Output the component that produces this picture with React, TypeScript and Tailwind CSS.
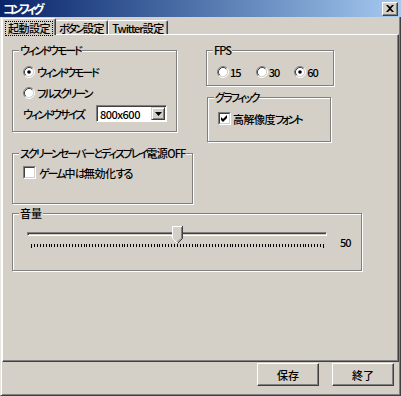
import type { ReactNode } from "react";

const font =
  "font-['Noto_Sans_CJK_JP',sans-serif] [font-feature-settings:'palt'] tracking-[-1px] whitespace-nowrap";

// kana are squeezed more than kanji, like the old bitmap UI font
const kana = "tracking-[-2px]";
const kanji = "tracking-[-0.5px]";

function Radio({ checked }: { checked?: boolean }) {
  return (
    <svg width="12" height="12" viewBox="0 0 12 12" className="shrink-0">
      <circle cx="6" cy="6" r="4.5" fill="#fff" />
      <path d="M2.11 9.89 A5.5 5.5 0 0 1 9.89 2.11" fill="none" stroke="#808080" />
      <path d="M9.89 2.11 A5.5 5.5 0 0 1 2.11 9.89" fill="none" stroke="#fff" />
      <path d="M2.82 9.18 A4.5 4.5 0 0 1 9.18 2.82" fill="none" stroke="#404040" />
      <path d="M9.18 2.82 A4.5 4.5 0 0 1 2.82 9.18" fill="none" stroke="#d4d0c8" />
      {checked && <circle cx="6" cy="6" r="1.8" fill="#000" />}
    </svg>
  );
}

function Checkbox({ checked }: { checked?: boolean }) {
  return (
    <span className="block h-[13px] w-[13px] shrink-0 border border-t-[#808080] border-l-[#808080] border-r-white border-b-white">
      <span className="block h-full w-full border border-t-[#404040] border-l-[#404040] border-r-[#d4d0c8] border-b-[#d4d0c8] bg-white">
        {checked && (
          <svg width="9" height="9" viewBox="0 0 9 9">
            <path d="M1 3 L3 5 L7 1 L7 4 L3 8 L1 6 Z" fill="#000" />
          </svg>
        )}
      </span>
    </span>
  );
}

function Group({
  label,
  className,
  children,
}: {
  label: ReactNode;
  className: string;
  children?: ReactNode;
}) {
  return (
    <div
      className={`relative border border-[#808080] shadow-[1px_1px_0_#fff,inset_1px_1px_0_#fff] ${className}`}
    >
      <span className="absolute top-[-7px] left-[6px] bg-[#d4d0c8] px-[1px] leading-[12px]">
        {label}
      </span>
      {children}
    </div>
  );
}

function Button({ label }: { label: string }) {
  return (
    <button
      type="button"
      className="flex h-[23px] w-[62px] items-center justify-center border border-t-white border-l-white border-r-[#404040] border-b-[#404040] leading-[12px] tracking-normal shadow-[inset_-1px_-1px_0_#808080]"
    >
      {label}
    </button>
  );
}

function Ticks() {
  const ticks = [];
  for (let i = 0; i <= 100; i++) {
    const x = Math.round(4 + i * 2.92) + 0.5;
    const end = i === 0 || i === 100;
    ticks.push(
      <line key={i} x1={x} x2={x} y1={0} y2={end ? 4 : 3} stroke="#000" />
    );
  }
  return (
    <svg width="300" height="5" className="absolute top-[19px] left-0">
      {ticks}
    </svg>
  );
}

export default function App() {
  return (
    <div
      className={`flex h-[396px] w-[401px] flex-col bg-[#d4d0c8] text-[11px] font-medium text-black ${font}`}
    >
      {/* title bar */}
      <div className="flex h-[17px] shrink-0 items-center justify-between bg-gradient-to-r from-[#0a246a] to-[#a6caf0] pr-[3px] pl-[3px]">
        <span className="text-[12px] leading-[12px] font-bold tracking-[-3px] text-white">
          コンフィグ
        </span>
        <span className="flex h-[14px] w-[16px] items-center justify-center border border-t-white border-l-white border-r-[#404040] border-b-[#404040] bg-[#d4d0c8] shadow-[inset_-1px_-1px_0_#808080]">
          <svg width="8" height="7" viewBox="0 0 8 7">
            <path
              d="M0 0h2l2 2 2-2h2L5 3.5 8 7H6L4 5 2 7H0l3-3.5Z"
              fill="#000"
            />
          </svg>
        </span>
      </div>

      {/* window body */}
      <div className="flex flex-1 flex-col border-r border-b border-l border-r-[#404040] border-b-[#404040] border-l-[#e6e4de] shadow-[inset_1px_0_0_#fff,inset_-1px_-1px_0_#808080]">
        {/* tabs */}
        <div className="flex h-[17px] shrink-0 items-end pl-[1px] leading-[12px]">
          <div className="relative z-10 -mb-px flex h-[17px] w-[54px] items-start justify-center rounded-t-[2px] border-t border-r border-l border-t-white border-r-[#404040] border-l-white bg-[#d4d0c8] pt-[2px] shadow-[inset_-1px_0_0_#808080]">
            <span className={`border border-dotted border-black px-[2px] pb-[1px] ${kanji}`}>
              起動設定
            </span>
          </div>
          <div className="flex h-[14px] w-[52px] items-start justify-center rounded-t-[2px] border-t border-r border-t-white border-r-[#404040] pt-[1px] shadow-[inset_-1px_0_0_#808080]">
            <span className={kana}>ボタン</span>
            <span className={kanji}>設定</span>
          </div>
          <div className="flex h-[14px] w-[60px] items-start justify-center rounded-t-[2px] border-t border-r border-l border-t-white border-r-[#404040] border-l-white pt-[1px] shadow-[inset_-1px_0_0_#808080]">
            Twitter<span className={kanji}>設定</span>
          </div>
        </div>

        {/* tab panel */}
        <div className="mx-[1px] h-[328px] shrink-0 border border-t-white border-r-[#404040] border-b-[#404040] border-l-white pt-[15px] pl-[9px] leading-[12px] shadow-[inset_-1px_-1px_0_#808080]">
          <div className="flex gap-[13px]">
            <div className="flex w-[181px] flex-col">
              <Group
                label={<span className={kana}>ウィンドウモード</span>}
                className="h-[82px] w-[165px]"
              >
                <div className="flex flex-col pt-[10px] pl-[10px]">
                  <div className="flex h-[21px] items-center gap-[2px]">
                    <Radio checked />
                    <span className={kana}>ウィンドウモード</span>
                  </div>
                  <div className="flex h-[21px] items-center gap-[2px]">
                    <Radio />
                    <span className={kana}>フルスクリーン</span>
                  </div>
                  <div className="flex h-[21px] items-center">
                    <span className={`w-[73px] ${kana}`}>ウィンドウサイズ</span>
                    <div className="flex h-[17px] w-[71px] items-center border border-t-[#808080] border-l-[#808080] border-r-white border-b-white bg-white shadow-[inset_1px_1px_0_#404040]">
                      <span className="flex-1 pl-[3px] tracking-[-0.5px]">800x600</span>
                      <span className="mr-[1px] flex h-[13px] w-[14px] items-center justify-center border border-t-[#d4d0c8] border-l-[#d4d0c8] border-r-[#404040] border-b-[#404040] bg-[#d4d0c8] shadow-[inset_1px_1px_0_#fff,inset_-1px_-1px_0_#808080]">
                        <svg width="7" height="4" viewBox="0 0 7 4">
                          <path d="M0 0h7L3.5 4Z" fill="#000" />
                        </svg>
                      </span>
                    </div>
                  </div>
                </div>
              </Group>

              <Group
                label={
                  <>
                    <span className={kana}>スクリーンセーバーとディスプレイ</span>
                    <span className={kanji}>電源</span>
                    <span className="tracking-[-1px]">OFF</span>
                  </>
                }
                className="mt-[21px] h-[51px] w-[181px]"
              >
                <div className="flex items-center gap-[3px] pt-[12px] pl-[10px]">
                  <Checkbox />
                  <span>
                    <span className={kana}>ゲーム</span>
                    <span className={kanji}>中</span>
                    <span className={kana}>は</span>
                    <span className={kanji}>無効化</span>
                    <span className={kana}>する</span>
                  </span>
                </div>
              </Group>
            </div>

            <div className="flex flex-col">
              <Group label="FPS" className="h-[36px] w-[128px]">
                <div className="mt-[10px] flex h-[20px] items-center pt-[1px] pl-[10px]">
                  <div className="flex w-[40px] items-center gap-[1px]">
                    <Radio />
                    <span>15</span>
                  </div>
                  <div className="flex w-[40px] items-center gap-[1px]">
                    <Radio />
                    <span>30</span>
                  </div>
                  <div className="flex w-[40px] items-center gap-[1px]">
                    <Radio checked />
                    <span>60</span>
                  </div>
                </div>
              </Group>

              <Group
                label={<span className={kana}>グラフィック</span>}
                className="mt-[11px] ml-[1px] h-[45px] w-[124px]"
              >
                <div className="flex items-center gap-[2px] pt-[14px] pl-[10px]">
                  <Checkbox checked />
                  <span>
                    <span className={kanji}>高解像度</span>
                    <span className="tracking-[-2.5px]">フォント</span>
                  </span>
                </div>
              </Group>
            </div>
          </div>

          <Group
            label={<span className="tracking-normal">音量</span>}
            className="mt-[9px] h-[58px] w-[350px]"
          >
            <div className="flex pt-[11px] pl-[14px]">
              <div className="relative h-[24px] w-[300px]">
                <div className="absolute top-[7px] left-0 h-[4px] w-full border border-t-[#808080] border-l-[#808080] border-r-white border-b-white bg-[#d4d0c8] shadow-[inset_1px_1px_0_#404040]" />
                <svg
                  width="11"
                  height="18"
                  viewBox="0 0 11 18"
                  className="absolute top-[1px] left-[145px]"
                >
                  <path d="M0 0H11V12.5L5.5 18L0 12.5Z" fill="#d4d0c8" />
                  <path d="M0.5 12.5V0.5H10" fill="none" stroke="#fff" />
                  <path d="M0.5 12.5L5 17" fill="none" stroke="#fff" />
                  <path d="M10.5 0V12.5L5.5 17.5" fill="none" stroke="#404040" />
                  <path d="M9.5 1V12L5.5 16" fill="none" stroke="#808080" />
                </svg>
                <Ticks />
              </div>
              <span className="mt-[11px] ml-[13px]">50</span>
            </div>
          </Group>
        </div>

        {/* footer buttons */}
        <div className="flex flex-1 justify-end gap-[13px] pt-[1px] pr-[6px]">
          <Button label="保存" />
          <Button label="終了" />
        </div>
      </div>
    </div>
  );
}
